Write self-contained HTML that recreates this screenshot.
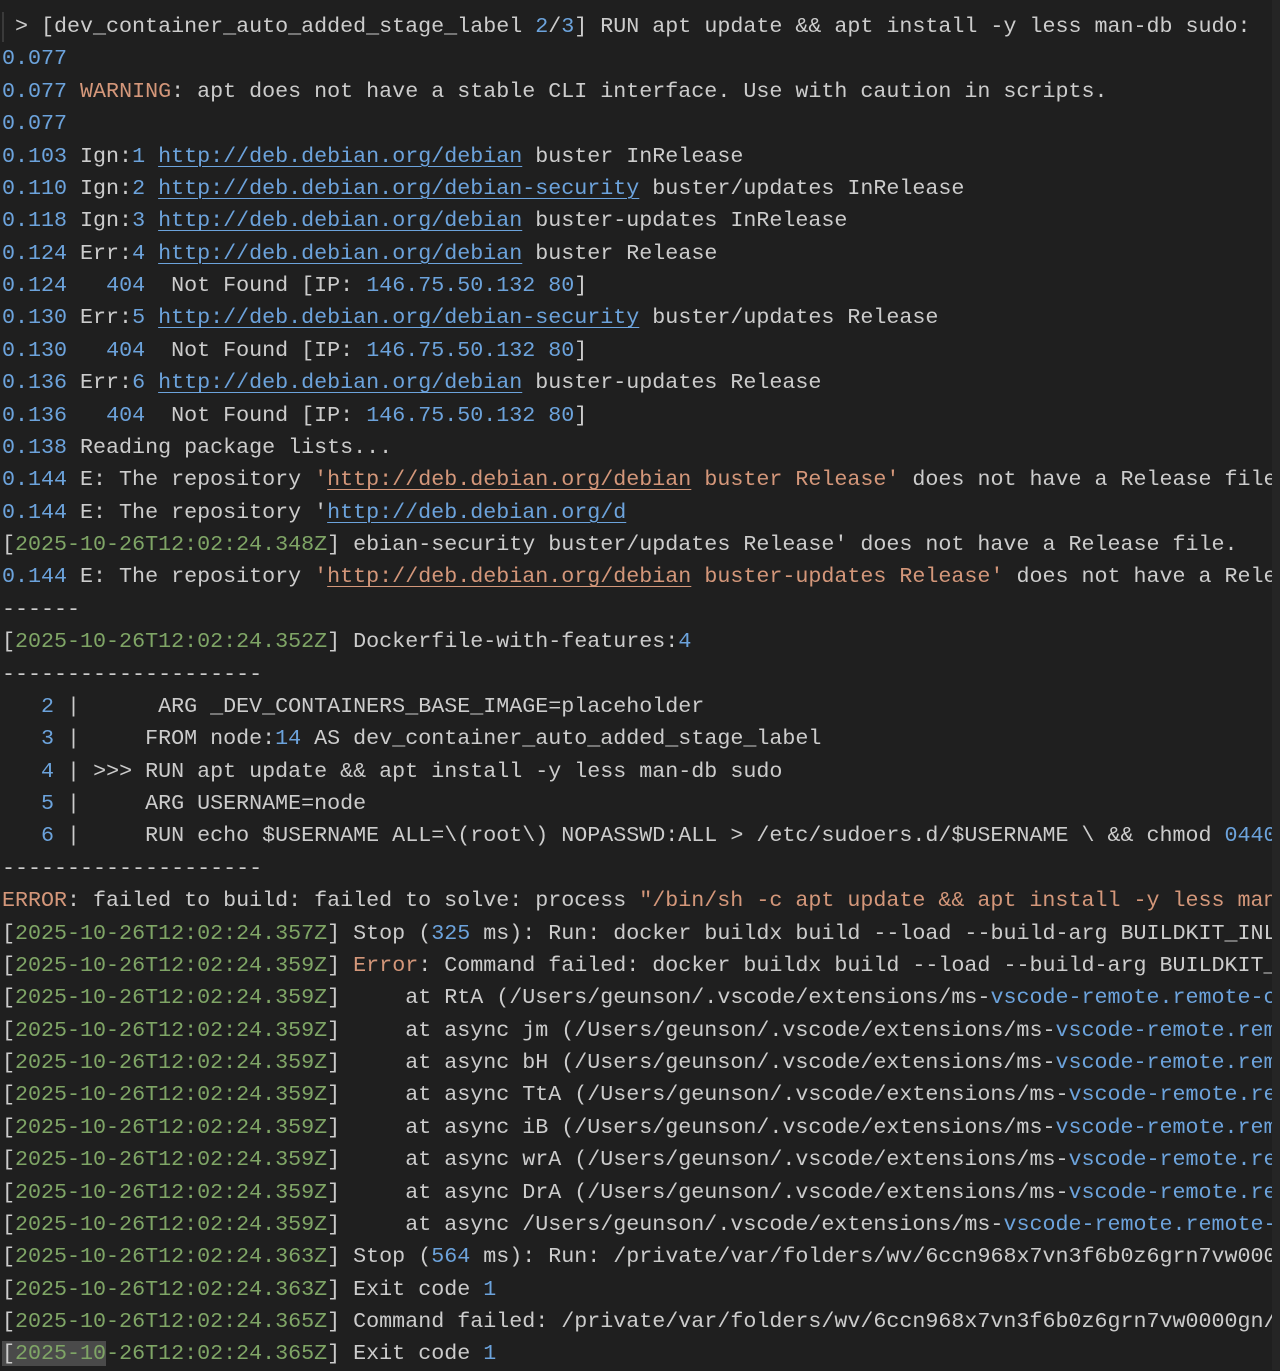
<!DOCTYPE html>
<html><head><meta charset="utf-8">
<style>
html,body{margin:0;padding:0;background:#1f1f1f;}
body{width:1280px;height:1370px;overflow:hidden;position:relative;}
#t{position:absolute;left:2px;top:11px;width:1270px;overflow:hidden;font-family:"Liberation Mono",monospace;font-size:21.68px;line-height:32.38px;color:#cccccc;white-space:pre;}
.b{color:#6ca3dc}
.g{color:#7fa566}
.o{color:#d4977a}
.u{text-decoration:underline;text-underline-offset:4px;text-decoration-thickness:1px}
.hl{background:#4a4a4a}
#sb{position:absolute;right:0;top:0;width:8px;height:1370px;background:#252525}
#bar{position:absolute;left:2px;top:12px;width:2px;height:30px;background:#3a3a3a}
</style></head><body>
<div id="bar"></div>
<div id="sb"></div>
<div id="t"> &gt; [dev_container_auto_added_stage_label <span class="b">2</span>/<span class="b">3</span>] RUN apt update &amp;&amp; apt install -y less man-db sudo:
<span class="b">0.077</span>
<span class="b">0.077</span> <span class="o">WARNING</span>: apt does not have a stable CLI interface. Use with caution in scripts.
<span class="b">0.077</span>
<span class="b">0.103</span> Ign:<span class="b">1</span> <span class="b u">http://deb.debian.org/debian</span> buster InRelease
<span class="b">0.110</span> Ign:<span class="b">2</span> <span class="b u">http://deb.debian.org/debian-security</span> buster/updates InRelease
<span class="b">0.118</span> Ign:<span class="b">3</span> <span class="b u">http://deb.debian.org/debian</span> buster-updates InRelease
<span class="b">0.124</span> Err:<span class="b">4</span> <span class="b u">http://deb.debian.org/debian</span> buster Release
<span class="b">0.124</span>   <span class="b">404</span>  Not Found [IP: <span class="b">146.75.50.132</span> <span class="b">80</span>]
<span class="b">0.130</span> Err:<span class="b">5</span> <span class="b u">http://deb.debian.org/debian-security</span> buster/updates Release
<span class="b">0.130</span>   <span class="b">404</span>  Not Found [IP: <span class="b">146.75.50.132</span> <span class="b">80</span>]
<span class="b">0.136</span> Err:<span class="b">6</span> <span class="b u">http://deb.debian.org/debian</span> buster-updates Release
<span class="b">0.136</span>   <span class="b">404</span>  Not Found [IP: <span class="b">146.75.50.132</span> <span class="b">80</span>]
<span class="b">0.138</span> Reading package lists...
<span class="b">0.144</span> E: The repository <span class="o">'<span class="u">http://deb.debian.org/debian</span> buster Release'</span> does not have a Release file.
<span class="b">0.144</span> E: The repository '<span class="b u">http://deb.debian.org/d</span>
[<span class="g">2025-10-26T12:02:24.348Z</span>] ebian-security buster/updates Release' does not have a Release file.
<span class="b">0.144</span> E: The repository <span class="o">'<span class="u">http://deb.debian.org/debian</span> buster-updates Release'</span> does not have a Release file.
------
[<span class="g">2025-10-26T12:02:24.352Z</span>] Dockerfile-with-features:<span class="b">4</span>
--------------------
   <span class="b">2</span> |      ARG _DEV_CONTAINERS_BASE_IMAGE=placeholder
   <span class="b">3</span> |     FROM node:<span class="b">14</span> AS dev_container_auto_added_stage_label
   <span class="b">4</span> | &gt;&gt;&gt; RUN apt update &amp;&amp; apt install -y less man-db sudo
   <span class="b">5</span> |     ARG USERNAME=node
   <span class="b">6</span> |     RUN echo $USERNAME ALL=\(root\) NOPASSWD:ALL &gt; /etc/sudoers.d/$USERNAME \ &amp;&amp; chmod <span class="b">0440</span>
--------------------
<span class="o">ERROR</span>: failed to build: failed to solve: process <span class="o">"/bin/sh -c apt update &amp;&amp; apt install -y less man-db sudo"</span>
[<span class="g">2025-10-26T12:02:24.357Z</span>] Stop (<span class="b">325</span> ms): Run: docker buildx build --load --build-arg BUILDKIT_INLINE_CACHE
[<span class="g">2025-10-26T12:02:24.359Z</span>] <span class="o">Error</span>: Command failed: docker buildx build --load --build-arg BUILDKIT_INLINE
[<span class="g">2025-10-26T12:02:24.359Z</span>]     at RtA (/Users/geunson/.vscode/extensions/ms-<span class="b">vscode-remote.remote-containers</span>
[<span class="g">2025-10-26T12:02:24.359Z</span>]     at async jm (/Users/geunson/.vscode/extensions/ms-<span class="b">vscode-remote.remote</span>
[<span class="g">2025-10-26T12:02:24.359Z</span>]     at async bH (/Users/geunson/.vscode/extensions/ms-<span class="b">vscode-remote.remote</span>
[<span class="g">2025-10-26T12:02:24.359Z</span>]     at async TtA (/Users/geunson/.vscode/extensions/ms-<span class="b">vscode-remote.remote</span>
[<span class="g">2025-10-26T12:02:24.359Z</span>]     at async iB (/Users/geunson/.vscode/extensions/ms-<span class="b">vscode-remote.remote</span>
[<span class="g">2025-10-26T12:02:24.359Z</span>]     at async wrA (/Users/geunson/.vscode/extensions/ms-<span class="b">vscode-remote.remote</span>
[<span class="g">2025-10-26T12:02:24.359Z</span>]     at async DrA (/Users/geunson/.vscode/extensions/ms-<span class="b">vscode-remote.remote</span>
[<span class="g">2025-10-26T12:02:24.359Z</span>]     at async /Users/geunson/.vscode/extensions/ms-<span class="b">vscode-remote.remote-containers</span>
[<span class="g">2025-10-26T12:02:24.363Z</span>] Stop (<span class="b">564</span> ms): Run: /private/var/folders/wv/6ccn968x7vn3f6b0z6grn7vw0000gn/T/
[<span class="g">2025-10-26T12:02:24.363Z</span>] Exit code <span class="b">1</span>
[<span class="g">2025-10-26T12:02:24.365Z</span>] Command failed: /private/var/folders/wv/6ccn968x7vn3f6b0z6grn7vw0000gn/T/
<span class="hl">[<span class="g">2025-10</span></span><span class="g">-26T12:02:24.365Z</span>] Exit code <span class="b">1</span></div>
</body></html>
